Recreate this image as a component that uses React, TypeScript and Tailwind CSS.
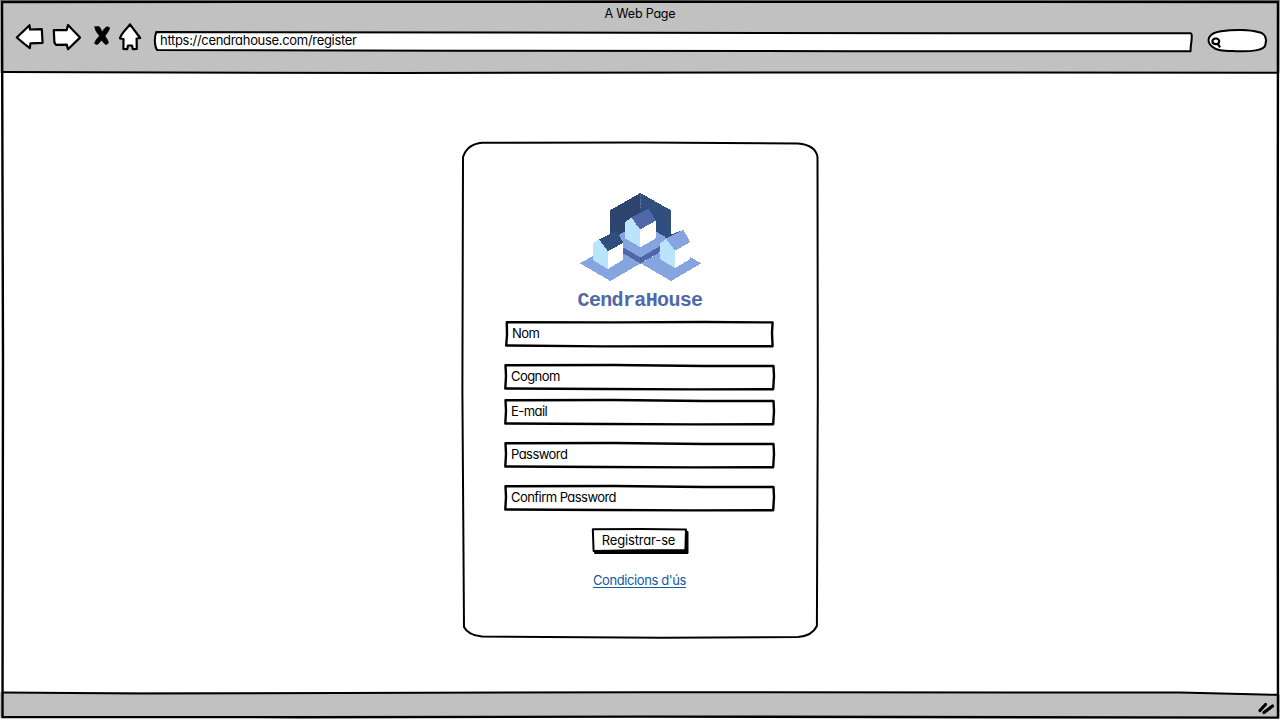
import type { ReactNode } from "react";

type OutlineProps = { w: number; h: number; d: string; fill?: string; stroke?: number };

function Outline({ w, h, d, fill = "#fff", stroke = 2 }: OutlineProps) {
  return (
    <svg
      className="pointer-events-none absolute inset-0 overflow-visible"
      width={w}
      height={h}
      viewBox={`0 0 ${w} ${h}`}
      fill={fill}
      stroke="#000"
      strokeWidth={stroke}
      strokeLinejoin="round"
      strokeLinecap="round"
    >
      <path d={d} />
    </svg>
  );
}

function NavIcon({ d, className, fill = "#fff", stroke = 2.2 }: { d: string; className: string; fill?: string; stroke?: number }) {
  return (
    <button className={className}>
      <svg
        className="overflow-visible"
        width="100%"
        height="28"
        fill={fill}
        stroke="#000"
        strokeWidth={stroke}
        strokeLinejoin="round"
        strokeLinecap="round"
      >
        <path d={d} />
      </svg>
    </button>
  );
}

function Field({ children, className, narrow = false }: { children: ReactNode; className: string; narrow?: boolean }) {
  const wide = "M1.5 1.3 L110 1 L200 2 L269.5 2 L270 12 L269.2 25.3 L190 25.4 L100 25 L1.3 24.5 L2 12 Z";
  const slim = "M2.8 1.2 L110 1.4 L200 1 L268.6 1.4 L268 12 L268.6 25.3 L190 25.2 L100 25.4 L2.2 24.5 L3 14 Z";
  return (
    <label className={`relative block h-[26px] w-[272px] shrink-0 ${className}`}>
      <Outline w={272} h={26} d={narrow ? slim : wide} stroke={2.4} />
      <span className={`relative block leading-[25px] tracking-[-0.55px] whitespace-nowrap ${narrow ? "pl-[8px]" : "pl-[7px]"}`}>{children}</span>
    </label>
  );
}

function Logo() {
  return (
    <svg className="h-[100px] w-[140px] shrink-0" viewBox="0 0 420 300" shapeRendering="crispEdges">
      <path fill="#2c446f" d="M211 24 L120 76 V180 L211 180 Z" />
      <path fill="#314f7e" d="M211 24 L303 76 V160 L211 180 Z" />
      <path stroke="#7587a8" strokeWidth="2" strokeDasharray="7 4" d="M211 30 V72" />
      <path fill="#86a5df" d="M30 235 L121 183 L212 235 L121 288 Z" />
      <path fill="#86a5df" d="M212 235 L303 183 L394 235 L303 288 Z" />
      <path fill="#5068aa" d="M130 170 L211 217 L303 164 V183 L211 235 L130 188 Z" />
      <path stroke="#43588c" strokeWidth="2" d="M211.5 217 V236" />
      <path fill="#86a5df" d="M120 165 L211 113 L303 165 L211 217 Z" />
      <path fill="#314f7e" d="M285 155 L340 135 L315 162 L290 164 Z" />
      <path fill="#b9e4fc" d="M165 112 L184 97 L211 135 V187 L165 160 Z" />
      <path fill="#fff" d="M211 133 L257 107 V160 L211 187 Z" />
      <path fill="#5068aa" d="M184 97 L236 71 L258 107 L211 133 Z" />
      <path fill="#b9e4fc" d="M69 175 L89 162 L114 200 V252 L69 225 Z" />
      <path fill="#fff" d="M114 199 L159 173 V225 L114 252 Z" />
      <path fill="#314f7e" d="M87 163 L139 137 L160 173 L114 199 Z" />
      <path fill="#b9e4fc" d="M270 175 L290 161 L315 198 V249 L270 222 Z" />
      <path fill="#fff" d="M315 197 L361 171 V222 L315 249 Z" />
      <path fill="#86a5df" d="M288 161 L340 135 L361 171 L315 197 Z" />
    </svg>
  );
}

export default function App() {
  return (
    <div className="relative flex h-[720px] w-[1280px] flex-col overflow-hidden bg-white font-['Inter','Open_Sans',sans-serif] text-[13px] text-black [font-feature-settings:'cv11']">
      <header className="relative h-[73px] shrink-0 bg-[#c1c1c1]">
        <h1 className="pt-[4px] text-center text-[12.5px] leading-[19px] tracking-[-0.2px]">A Web Page</h1>
        <div className="flex items-start pl-[16px]">
          <NavIcon className="w-[28px]" d="M.8 14.5 L13.5 2.2 L14 6.5 L25.8 6.2 L26.6 19.8 L14.5 20.3 L13.8 25.2 L8.5 21 Z" />
          <NavIcon className="ml-[8px] w-[28px]" d="M1.8 7 L14.6 7.2 L16 2 L28 14.6 L16 26.3 L14.7 21.6 L4 21.8 L2.4 19.5 Z" />
          <NavIcon
            className="ml-[14px] w-[16px]"
            fill="#000"
            stroke={0.8}
            d="M1 4 L4.8 3.4 C6.8 5 7.2 7.5 8.4 9.3 C9.5 6.5 11.3 4.3 13.3 3.8 L15.6 4.8 C15 8 12.8 10.5 11 12.8 C11.8 15.5 14.8 17.5 14.2 20.2 L12 21.6 C9.8 20.4 8.8 18.7 7.6 17 C6 18.7 5 20.7 3 21.5 L.6 20.5 C1.3 17.3 3.8 15 5.6 12.8 C3.8 10.3 1 8 1 4 Z"
          />
          <NavIcon className="ml-[9px] w-[24px]" d="M11 1.3 L21.2 15 L17.6 15.5 L17.8 26 L13.9 26.2 L13 22.5 L9 22.5 L8.2 26.2 L4.4 26 L4.5 16 L1 15.5 C2 10 8 6 11 1.3 Z" />
          <div className="relative mt-[8px] ml-[10px] h-[20px] w-[1040px]">
            <Outline w={1040} h={20} d="M3.3 1 L340 1.5 L800 2.2 L1037.5 2.2 Q1039 3 1038.7 5 C1039 11 1037.3 14 1037.6 20.2 L700 20.2 L300 19.8 L4 18.9 C1.4 15 1.2 6 3.3 1 Z" />
            <span className="relative block pl-[7px] leading-[19px] tracking-[-0.31px]">https://cendrahouse.com/register</span>
          </div>
          <div className="relative mt-[6px] ml-[14px] h-[24px] w-[60px]">
            <Outline w={60} h={24} d="M14 2.2 C27 .3 43 .4 51 3 C58 4 60 9 58.5 15 C58.5 22 42 22.6 30 22.2 C18 21.8 10 22.3 5 17.5 C-1.8 11.5 1.5 4 14 2.2 Z" />
            <svg className="absolute top-[8px] left-[4px] overflow-visible" width="11" height="12" fill="none" stroke="#000" strokeWidth="2.2" strokeLinecap="round">
              <path d="M5.2 1.5 C2.5 1.3 1 3 1.5 5 C2 7.4 7 8 8 5.5 C8.7 3.5 7.5 1.8 5.2 1.5 M7 7.2 L8.6 9.6" />
            </svg>
          </div>
        </div>
      </header>

      <main className="flex flex-1 justify-center pt-[69px]">
        <section className="relative flex h-[497px] w-[357px] flex-col items-center">
          <Outline w={357} h={497} stroke={2} d="M20 .8 L180 .6 L336 1.5 Q353.5 3 355.5 15 L355.8 250 L354.9 484 Q350 494 336 495 L200 495.8 L20 494.6 Q6 493 2 485 L.4 250 L1 15 Q5.5 2 20 .8 Z" />
          <div className="relative mt-[43px] flex flex-col items-center">
            <Logo />
            <h2 className="mt-[6px] font-['Liberation_Mono',monospace] text-[20px] leading-[20px] font-bold tracking-[-0.65px] text-[#5068aa]">CendraHouse</h2>
            <form className="flex flex-col items-center">
              <Field narrow className="mt-[10px]">Nom</Field>
              <Field className="mt-[17px]">Cognom</Field>
              <Field className="mt-[9px]">E-mail</Field>
              <Field className="mt-[17px]">Password</Field>
              <Field className="mt-[17px]">Confirm Password</Field>
            </form>
            <button className="relative mt-[16px] h-[27px] w-[98px]">
              <Outline w={98} h={27} fill="#000" stroke={1} d="M4 4.5 L97 4.5 L97 26.5 L4 26.5 Z" />
              <Outline w={98} h={27} d="M1.8 2.3 L50 2 L95 2.5 L94.4 23 L50 23.2 L2.6 24 Z" />
              <span className="relative block pr-[3px] tracking-[-0.15px]">Registrar-se</span>
            </button>
            <a className="mt-[19px] mr-px border-b border-[#1560a5] leading-[14px] tracking-[-0.4px] text-[#0f5a9c]">Condicions d'ús</a>
          </div>
        </section>
      </main>

      <footer className="relative h-[28px] shrink-0 bg-[#c1c1c1]">
        <svg className="absolute inset-0 overflow-visible" width="1280" height="28" fill="#c1c1c1" stroke="#000" strokeWidth="2.4" strokeLinecap="round">
          <path stroke="none" fill="#fff" d="M0 -1 H1280 V2.5 L1180 0 Z M0 25.5 H1280 V28 H0 Z" />
          <path strokeWidth="2" fill="none" d="M3 .6 L140 1.5 L640 .3 L1180 .6 L1277 2.8" />
          <path strokeWidth="3.2" d="M1260 18.5 L1265.5 12.5 M1264 20.5 L1272.5 14" />
        </svg>
      </footer>

      <svg className="pointer-events-none absolute inset-0" width="1280" height="720" fill="none" stroke="#000">
        <path stroke="#858985" strokeWidth="1" d="M0 .5 H1280" />
        <path strokeWidth="2.4" d="M2 2 L640 1.8 L1278 2 L1277.6 360 L1278 717.6 L640 716.6 L300 717.2 L2.5 717 L3 360 Z" />
        <path strokeWidth="2" d="M3 72 L400 73 L900 72.4 L1277 72.8" />
      </svg>
    </div>
  );
}
